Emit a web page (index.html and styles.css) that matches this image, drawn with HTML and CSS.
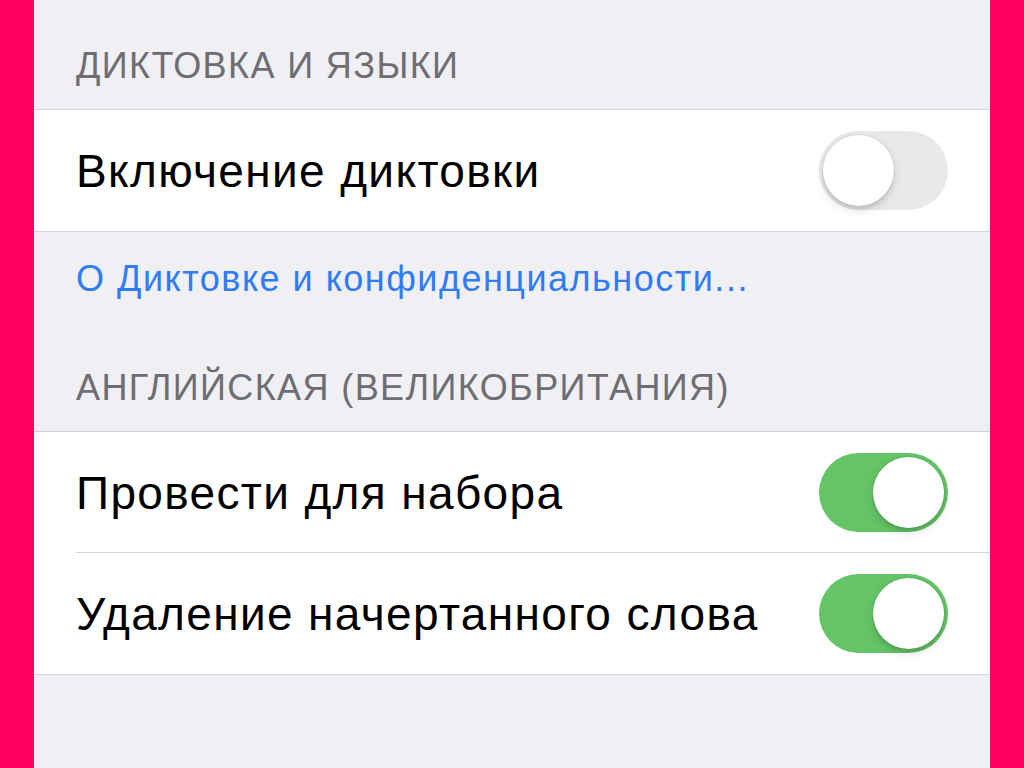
FILE: index.html
```html
<!DOCTYPE html>
<html lang="ru">
<head>
    <meta charset="UTF-8">
    <meta name="viewport" content="width=device-width, initial-scale=1.0">
    <title>Диктовка</title>
    <link rel="stylesheet" href="styles.css">
</head>
<body>
    <div class="screen">
        <div class="section-header first">ДИКТОВКА И ЯЗЫКИ</div>
        <div class="group">
            <div class="cell">
                <span class="cell-label">Включение диктовки</span>
                <span class="switch"><span class="knob"></span></span>
            </div>
        </div>
        <div class="section-footer">
            <a href="#" class="footer-link">О Диктовке и конфиденциальности...</a>
        </div>

        <div class="section-header">АНГЛИЙСКАЯ (ВЕЛИКОБРИТАНИЯ)</div>
        <div class="group">
            <div class="cell">
                <span class="cell-label">Провести для набора</span>
                <span class="switch on"><span class="knob"></span></span>
            </div>
            <div class="cell">
                <span class="cell-label">Удаление начертанного слова</span>
                <span class="switch on"><span class="knob"></span></span>
            </div>
        </div>
    </div>
</body>
</html>
```

FILE: styles.css
```css
:root {
    --frame-color: #ff0060;
    --grouped-bg: #efeff4;
    --separator: #d4d4d8;
    --header-text: #6d6d72;
    --link-color: #2f7cf6;
    --switch-on: #64c466;
    --switch-off: #e9e9eb;
}
html, body {
    height: 100%;
}
body {
    margin: 0;
    padding: 0 34px;
    background-color: var(--frame-color);
    font-family: 'Liberation Sans', Arial, sans-serif;
    overflow: hidden;
}
.screen {
    height: 100%;
    background-color: var(--grouped-bg);
}
.section-header {
    padding: 20px 42px 25px;
    font-size: 36px;
    line-height: 36px;
    letter-spacing: 1.4px;
    color: var(--header-text);
}
.section-header.first {
    padding-top: 48px;
}
.group {
    background-color: #fff;
    border-top: 1px solid var(--separator);
    border-bottom: 1px solid var(--separator);
}
.cell {
    position: relative;
    display: flex;
    align-items: center;
    justify-content: space-between;
    height: 121px;
    padding: 0 42px;
}
/* inset separator between rows */
.cell:not(:last-child)::after {
    content: "";
    position: absolute;
    left: 42px;
    right: 0;
    bottom: 0;
    height: 1px;
    background-color: var(--separator);
}
.cell-label {
    font-size: 46px;
    letter-spacing: 1.35px;
    color: #000;
}
.section-footer {
    padding: 25px 42px 0;
    height: 93px;
}
.footer-link {
    font-size: 36px;
    line-height: 44px;
    letter-spacing: 1.5px;
    color: var(--link-color);
    text-decoration: none;
}
.switch {
    position: relative;
    width: 129px;
    height: 79px;
    border-radius: 40px;
    background-color: var(--switch-off);
    flex-shrink: 0;
}
.switch .knob {
    position: absolute;
    top: 4px;
    left: 4px;
    width: 71px;
    height: 71px;
    border-radius: 50%;
    background-color: #fff;
    box-shadow: 0 4px 10px rgba(0, 0, 0, 0.14), 0 4px 2px rgba(0, 0, 0, 0.05), 0 0 0 1px rgba(0, 0, 0, 0.04);
}
.switch.on {
    background-color: var(--switch-on);
}
.switch.on .knob {
    left: 54px;
}
```
